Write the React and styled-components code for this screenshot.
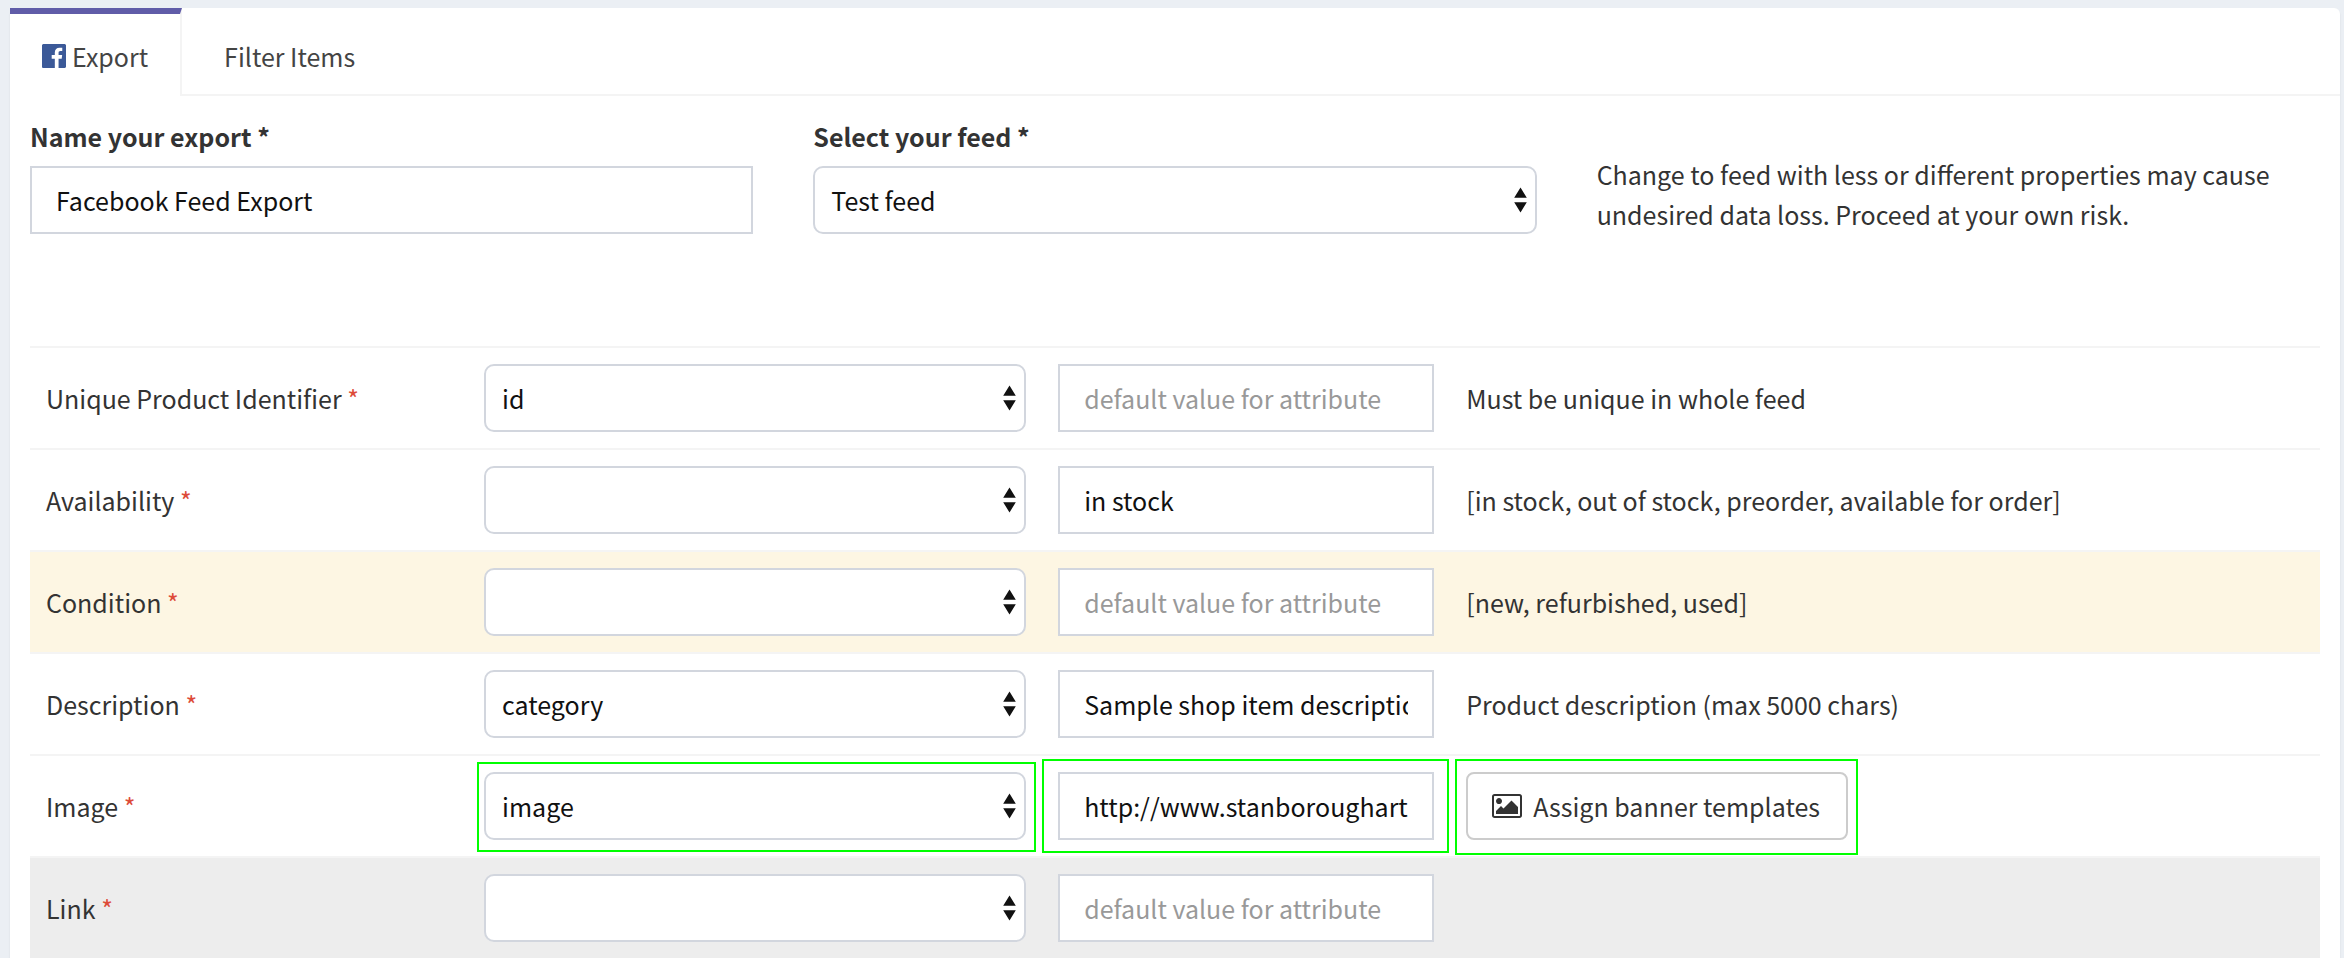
import React from 'react';
import styled, { createGlobalStyle, css } from 'styled-components';

const GlobalStyle = createGlobalStyle`
  *, *::before, *::after { box-sizing: border-box; }
  body {
    margin: 0;
    background: #ebeff4;
    color: #333;
    font-family: "Source Sans Pro", "Noto Sans CJK JP", "Noto Sans", sans-serif;
    font-size: 25px;
    line-height: 40px;
  }
`;

const Page = styled.main`
  padding: 8px 4px 0 10px;
`;

const Panel = styled.section`
  background: #fff;
  border-radius: 6px 6px 0 0;
  box-shadow: 0 2px 2px rgba(0, 0, 0, 0.1);
`;

const Tabs = styled.nav`
  display: flex;
  gap: 10px;
  height: 88px;
  border-bottom: 2px solid #f4f4f4;
`;

const Tab = styled.a`
  display: flex;
  align-items: center;
  gap: 6px;
  height: 88px;
  padding: 2px 32px 0;
  border-top: 6px solid transparent;
  color: #444;
  text-decoration: none;
  ${({ $active }) =>
    $active &&
    css`
      border-top-color: #605ca8;
      border-right: 2px solid #f4f4f4;
      background: #fff;
    `}
`;

const Content = styled.form`
  padding: 20px 20px 0;
`;

const Settings = styled.div`
  display: grid;
  grid-template-columns: repeat(3, 1fr);
  gap: 60px;
  padding-bottom: 112px;
`;

const Field = styled.div`
  display: flex;
  flex-direction: column;
  gap: 10px;
`;

const FieldLabel = styled.label`
  font-weight: 700;
`;

const Notice = styled.p`
  margin: 0;
  padding-top: 38px;
`;

const control = css`
  display: block;
  width: 100%;
  height: 68px;
  margin: 0;
  border: 2px solid #d2d6de;
  background: #fff;
  color: #111;
  font: inherit;
`;

const TextInput = styled.input`
  ${control}
  padding: 0 24px;
  border-radius: 0;
  &::placeholder { color: #999; opacity: 1; }
`;

const SelectBox = styled.select`
  ${control}
  padding: 0 40px 0 16px;
  border-radius: 10px;
  appearance: none;
`;

const SelectWrap = styled.div`
  position: relative;
`;

const Arrows = styled.svg`
  position: absolute;
  top: 21px;
  right: 10px;
  width: 13px;
  height: 26px;
  fill: #111;
  pointer-events: none;
`;

const MappingTable = styled.table`
  width: 100%;
  table-layout: fixed;
  border-collapse: separate;
  border-spacing: 0;
`;

const Column = styled.col`
  width: ${({ $width }) => $width};
`;

const tones = { plain: '#fff', warning: '#fdf6e3', muted: '#ededed' };

const Row = styled.tr`
  background: ${({ $tone }) => tones[$tone]};
`;

const Cell = styled.td`
  padding: 16px;
  border-top: 2px solid #f4f4f4;
  text-align: left;
  font-weight: 400;
  vertical-align: middle;
`;

const Required = styled.span`
  color: #dd4b39;
`;

const Marked = styled.div`
  position: relative;
  width: ${({ $fit }) => ($fit ? 'fit-content' : 'auto')};
  ${({ $inset }) =>
    $inset &&
    css`
      &::after {
        content: "";
        position: absolute;
        inset: ${$inset};
        border: 2px solid #0f0;
        pointer-events: none;
      }
    `}
`;

const BannerButton = styled.button`
  display: flex;
  align-items: center;
  gap: 11px;
  height: 68px;
  padding: 0 26px 0 24px;
  border: 2px solid #ccc;
  border-radius: 8px;
  background: #fff;
  color: #333;
  font: inherit;
  white-space: nowrap;
`;

const FacebookMark = styled.svg`
  width: 24px;
  height: 24px;
  fill: #3b5998;
`;

const PictureMark = styled.svg`
  width: 30px;
  height: 24px;
  fill: #333;
`;

function FacebookIcon() {
  return (
    <FacebookMark viewBox="128 128 1536 1536" aria-hidden="true">
      <path d="M1579 128q35 0 60 25t25 60v1366q0 35-25 60t-60 25h-391v-595h199l30-232h-229v-148q0-56 23.5-84t91.5-28l122-1v-207q-63-9-178-9-136 0-217.5 80t-81.5 226v172h-200v232h200v595h-735q-35 0-60-25t-25-60v-1366q0-35 25-60t60-25h1366z" />
    </FacebookMark>
  );
}

function PictureIcon() {
  return (
    <PictureMark viewBox="64 128 1920 1536" aria-hidden="true">
      <path d="M704 576q0 80-56 136t-136 56-136-56-56-136 56-136 136-56 136 56 56 136zm1024 384v448h-1408v-192l320-320 160 160 512-512zm96-704h-1600q-13 0-22.5 9.5t-9.5 22.5v1216q0 13 9.5 22.5t22.5 9.5h1600q13 0 22.5-9.5t9.5-22.5v-1216q0-13-9.5-22.5t-22.5-9.5zm160 32v1216q0 66-47 113t-113 47h-1600q-66 0-113-47t-47-113v-1216q0-66 47-113t113-47h1600q66 0 113 47t47 113z" />
    </PictureMark>
  );
}

function Select({ id, value }) {
  return (
    <SelectWrap>
      <SelectBox id={id} defaultValue={value}>
        <option value={value}>{value}</option>
      </SelectBox>
      <Arrows viewBox="0 0 13 26" aria-hidden="true">
        <path d="M6.5 0.5 12.8 10.8H0.2zM0.2 15.2H12.8L6.5 25.5z" />
      </Arrows>
    </SelectWrap>
  );
}

const rows = [
  { id: 'identifier', label: 'Unique Product Identifier', source: 'id', fallback: '', hint: 'Must be unique in whole feed' },
  { id: 'availability', label: 'Availability', source: '', fallback: 'in stock', hint: '[in stock, out of stock, preorder, available for order]' },
  { id: 'condition', label: 'Condition', source: '', fallback: '', hint: '[new, refurbished, used]', tone: 'warning' },
  { id: 'description', label: 'Description', source: 'category', fallback: 'Sample shop item description', hint: 'Product description (max 5000 chars)' },
  { id: 'image', label: 'Image', source: 'image', fallback: 'http://www.stanborougharts', banner: true, marked: true },
  { id: 'link', label: 'Link', source: '', fallback: '', hint: '', tone: 'muted' },
];

function MappingRow({ row }) {
  return (
    <Row $tone={row.tone || 'plain'}>
      <Cell as="th" scope="row">
        <label htmlFor={row.id}>
          {row.label} <Required>*</Required>
        </label>
      </Cell>
      <Cell>
        <Marked $inset={row.marked && '-10px -10px -12px -7px'}>
          <Select id={row.id} value={row.source} />
        </Marked>
      </Cell>
      <Cell>
        <Marked $inset={row.marked && '-13px -15px -13px -16px'}>
          <TextInput
            type="text"
            aria-label={`${row.label} default value`}
            placeholder="default value for attribute"
            defaultValue={row.fallback}
          />
        </Marked>
      </Cell>
      <Cell>
        {row.banner ? (
          <Marked $fit $inset="-13px -10px -15px -11px">
            <BannerButton type="button">
              <PictureIcon />
              Assign banner templates
            </BannerButton>
          </Marked>
        ) : (
          row.hint
        )}
      </Cell>
    </Row>
  );
}

export default function App() {
  return (
    <>
      <GlobalStyle />
      <Page>
        <Panel>
          <Tabs>
            <Tab href="#export" $active aria-current="page">
              <FacebookIcon />
              Export
            </Tab>
            <Tab href="#filter">Filter Items</Tab>
          </Tabs>
          <Content>
            <Settings>
              <Field>
                <FieldLabel htmlFor="name">Name your export *</FieldLabel>
                <TextInput id="name" type="text" defaultValue="Facebook Feed Export" />
              </Field>
              <Field>
                <FieldLabel htmlFor="feed">Select your feed *</FieldLabel>
                <Select id="feed" value="Test feed" />
              </Field>
              <Notice>
                Change to feed with less or different properties may cause undesired data loss.
                Proceed at your own risk.
              </Notice>
            </Settings>
            <MappingTable>
              <colgroup>
                <Column $width="19.13%" />
                <Column $width="25.07%" />
                <Column $width="17.82%" />
                <Column $width="auto" />
              </colgroup>
              <tbody>
                {rows.map((row) => (
                  <MappingRow key={row.id} row={row} />
                ))}
              </tbody>
            </MappingTable>
          </Content>
        </Panel>
      </Page>
    </>
  );
}
